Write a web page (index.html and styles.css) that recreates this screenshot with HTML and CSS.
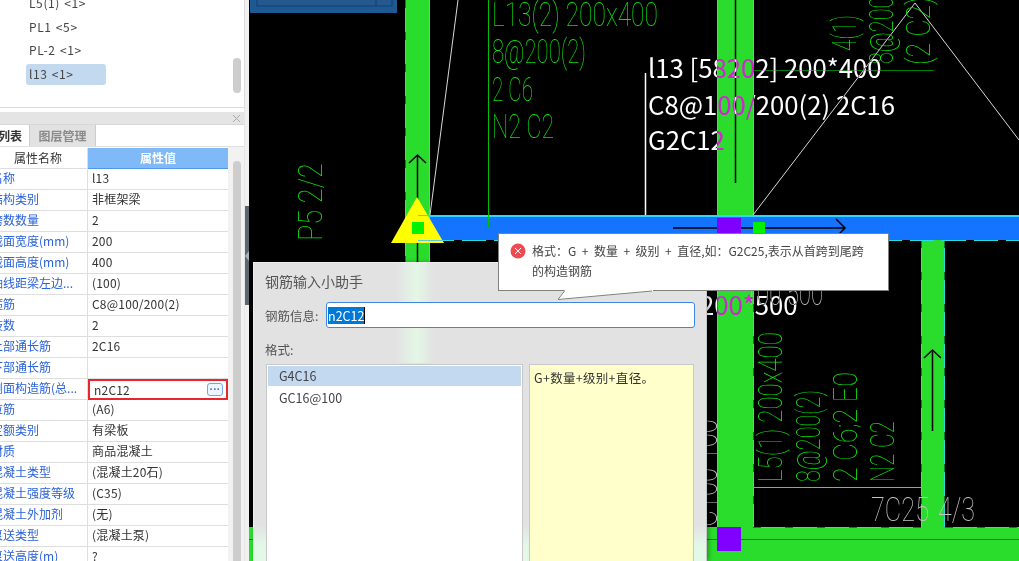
FILE: index.html
```html
<!DOCTYPE html>
<html lang="zh-CN">
<head>
<meta charset="utf-8">
<title>钢筋输入小助手</title>
<link rel="stylesheet" href="styles.css">
</head>
<body>
<div class="app">
  <aside class="side">
    <section class="tree">
      <ul class="tree-list">
        <li class="tree-item">L5(1) &lt;1&gt;</li>
        <li class="tree-item">PL1 &lt;5&gt;</li>
        <li class="tree-item">PL-2 &lt;1&gt;</li>
        <li class="tree-item selected">l13 &lt;1&gt;</li>
      </ul>
      <div class="tree-scroll"><span class="tree-thumb"></span></div>
    </section>
    <section class="props">
      <div class="props-title"><svg class="close" width="9" height="9" viewBox="0 0 9 9"><path d="M1 1l7 7M8 1l-7 7" stroke="#aaa" stroke-width="1" fill="none"/></svg></div>
      <div class="tabs">
        <span class="tab active">构件列表</span>
        <span class="tab">图层管理</span>
      </div>
      <div class="props-body">
        <div class="grid">
          <div class="hname">属性名称</div><div class="hval">属性值</div>
          <div class="n">名称</div><div class="v">l13</div>
          <div class="n">结构类别</div><div class="v">非框架梁</div>
          <div class="n">跨数数量</div><div class="v">2</div>
          <div class="n">截面宽度(mm)</div><div class="v">200</div>
          <div class="n">截面高度(mm)</div><div class="v">400</div>
          <div class="n">轴线距梁左边...</div><div class="v">(100)</div>
          <div class="n">箍筋</div><div class="v">C8@100/200(2)</div>
          <div class="n">肢数</div><div class="v">2</div>
          <div class="n">上部通长筋</div><div class="v">2C16</div>
          <div class="n">下部通长筋</div><div class="v"></div>
          <div class="n">侧面构造筋(总...</div><div class="v editing"><span>n2C12</span><button class="more" type="button">···</button></div>
          <div class="n">拉筋</div><div class="v">(A6)</div>
          <div class="n">定额类别</div><div class="v">有梁板</div>
          <div class="n">材质</div><div class="v">商品混凝土</div>
          <div class="n">混凝土类型</div><div class="v">(混凝土20石)</div>
          <div class="n">混凝土强度等级</div><div class="v">(C35)</div>
          <div class="n">混凝土外加剂</div><div class="v">(无)</div>
          <div class="n">泵送类型</div><div class="v">(混凝土泵)</div>
          <div class="n">泵送高度(m)</div><div class="v">?</div>
        </div>
        <div class="props-scroll"><span class="props-thumb"></span></div>
      </div>
    </section>
  </aside>
  <div class="gutter"><span class="gutter-top"></span><span class="gutter-arrow"></span></div>

  <main class="canvas">
    <svg class="drawing" width="770" height="561" viewBox="249 0 770 561">
      <rect x="250" y="-2" width="147" height="15" fill="#1d5a94"/>
      <rect x="257" y="-2" width="135" height="8" fill="#24588f" stroke="#153f6e"/>
      <path d="M376 0V6" stroke="#153f6e"/>

      <g fill="#2adc2c">
        <rect x="405" y="0" width="25" height="300"/>
        <rect x="717" y="0" width="37" height="561"/>
        <rect x="921" y="240" width="24" height="290"/>
        <rect x="249" y="527" width="770" height="34"/>
      </g>
      <g stroke="#29dcdc" fill="none">
        <path d="M405.500 0V270M429.500 0V270M717.500 0V215M753.500 0V215M717.500 240V527M753.500 240V527M921.500 240V527M944.500 240V527M753 527.500H921M945 527.500H1019"/>
      </g>
      <g stroke="#157a2a" stroke-dasharray="8 24" fill="none">
        <path d="M405.500 0V270M753.500 240V527M921.500 240V527M944.500 240V527M753 527.500H921M945 527.500H1019"/>
      </g>
      <path d="M249 539.500H1019" stroke="#d01818"/>

      <rect x="430" y="215" width="589" height="25" fill="#1473ff"/>
      <path d="M430 216H1019" stroke="#2fd4ff" stroke-width="2"/>
      <path d="M430 240.500H1019" stroke="#29dcdc" stroke-dasharray="24 8"/>

      <g stroke="#fff" fill="none">
        <path d="M645.500 73V215" stroke-width="1.500"/>
        <path d="M458 0L430 215M753 215L915 3L1019 140" stroke="#d8d8d8"/>
      </g>

      <g stroke="#000" stroke-width="1.500" fill="none">
        <path d="M417.500 156V262M409 163L417.500 155L426 163"/>
        <path d="M735.500 0V183"/>
        <path d="M673 228H844M836 219L845 228L836 237"/>
        <path d="M932.500 431V350M924 358L932.500 350L941 358"/>
      </g>

      <path d="M488.500 0V227" stroke="#00c000"/>
      <path d="M754 70.500H934" stroke="#008000"/>
      <path d="M753 487.500H921" stroke="#10ff10"/>

      <polygon points="417,197 391,243 444,243" fill="#ffff00"/>
      <rect x="412" y="222" width="12" height="12" fill="#00f000"/>
      <path d="M418 215.500H430M418 240.500H443" stroke="#5fc8e0"/>
      <g fill="#8000ff">
        <rect x="717" y="218" width="24" height="22"/>
        <rect x="717" y="527" width="24" height="24"/>
      </g>
      <rect x="753" y="222" width="12" height="18" fill="#00f000"/>

      <g class="cad">
        <text x="492" y="26" textLength="166" lengthAdjust="spacingAndGlyphs">L13(2) 200x400</text>
        <text x="492" y="63" textLength="94" lengthAdjust="spacingAndGlyphs">8@200(2)</text>
        <text x="492" y="101" textLength="41" lengthAdjust="spacingAndGlyphs">2 C6</text>
        <text x="492" y="138" textLength="62" lengthAdjust="spacingAndGlyphs">N2 C2</text>
        <text transform="translate(322 241) rotate(-90)" textLength="78" lengthAdjust="spacingAndGlyphs">P5 2/2</text>
        <text transform="translate(856 51) rotate(-90)" textLength="36" lengthAdjust="spacingAndGlyphs">4(1)</text>
        <text transform="translate(893 64) rotate(-90)" textLength="92" lengthAdjust="spacingAndGlyphs">8@200(2)</text>
        <text transform="translate(930 65) rotate(-90)" textLength="68" lengthAdjust="spacingAndGlyphs">(2 C2)</text>
        <text transform="translate(782 482) rotate(-90)" textLength="150" lengthAdjust="spacingAndGlyphs">L5(1) 200x400</text>
        <text transform="translate(820 482) rotate(-90)" textLength="92" lengthAdjust="spacingAndGlyphs">8@200(2)</text>
        <text transform="translate(857 482) rotate(-90)" textLength="110" lengthAdjust="spacingAndGlyphs">2 C6;2 E0</text>
        <text transform="translate(894 482) rotate(-90)" textLength="61" lengthAdjust="spacingAndGlyphs">N2 C2</text>
      </g>
      <g class="cad cad-white">
        <text x="871" y="521" textLength="58" lengthAdjust="spacingAndGlyphs">7C25</text>
        <text x="938" y="521" textLength="37" lengthAdjust="spacingAndGlyphs">4/3</text>
        <text x="745" y="305" textLength="78" lengthAdjust="spacingAndGlyphs">100 500</text>
        <text transform="translate(717 527) rotate(-90)" textLength="108" lengthAdjust="spacingAndGlyphs">C100 100</text>
      </g>

      <g class="mtext">
        <text x="648" y="78">l13 [58202] 200*400</text>
        <text x="648" y="115">C8@100/200(2) 2C16</text>
        <text x="648" y="150">G2C12</text>
        <text x="700" y="315">200*500</text>
      </g>
    </svg>

    <section class="dialog">
      <i class="glow-v"></i>
      <i class="glow-h"></i>
      <h2 class="dialog-title">钢筋输入小助手</h2>
      <div class="field">
        <label class="field-label" for="rebar">钢筋信息:</label>
        <div class="field-input" id="rebar"><span class="sel">n2C12</span></div>
      </div>
      <div class="format-label">格式:</div>
      <div class="format-panes">
        <ul class="format-list">
          <li class="format-item selected">G4C16</li>
          <li class="format-item">GC16@100</li>
        </ul>
        <div class="format-desc">G+数量+级别+直径。</div>
      </div>
    </section>

    <div class="tip">
      <svg class="tip-tail" width="100" height="12" viewBox="0 0 100 12"><polygon points="8,0 0,10 96,1 96,0" fill="#fff"/><path d="M7.500 1L1 9.500L95 1" fill="none" stroke="#808080"/></svg>
      <svg class="tip-icon" width="16" height="16" viewBox="0 0 16 16"><circle cx="8" cy="8" r="7.500" fill="#ee4a52"/><path d="M5 5l6 6M11 5l-6 6" stroke="#fff" stroke-width="1" fill="none"/></svg>
      <p class="tip-text">格式：G + 数量 + 级别 + 直径,如：G2C25,表示从首跨到尾跨<br>的构造钢筋</p>
    </div>
  </main>
</div>
</body>
</html>
```
FILE: styles.css
```css
* { box-sizing: border-box; }
html, body { margin: 0; height: 100%; overflow: hidden; }
body { font-family: "Noto Sans CJK SC", "Noto Sans", sans-serif; font-size: 12px; color: #333; background: #000; }
ul { list-style: none; margin: 0; padding: 0; }

.app { display: flex; width: 1019px; height: 561px; overflow: hidden; }

.side { width: 245px; flex: none; background: #fff; display: flex; flex-direction: column; }
.tree { height: 108px; flex: none; border-bottom: 1px solid #dcdcdc; border-right: 1px solid #dcdcdc; position: relative; overflow: hidden; }
.tree-list { margin-top: -7px; padding-left: 26px; display: flex; flex-direction: column; gap: 2px; }
.tree-item { width: 80px; height: 21.500px; line-height: 20px; padding-left: 3px; border-radius: 3px; color: #444; letter-spacing: .6px; word-spacing: 1px; }
.tree-item.selected { background: #c3d9f0; }
.tree-scroll { position: absolute; top: 0; right: 3px; width: 8px; height: 100%; }
.tree-thumb { position: absolute; top: 58px; left: 0; width: 8px; height: 35px; border-radius: 4px; background: #cdcdcd; }

.props { flex: 1; min-height: 0; padding-top: 4px; display: flex; flex-direction: column; border-right: 1px solid #e6e6e6; }
.props-title { height: 12px; flex: none; background: #e4e4e4; display: flex; align-items: center; justify-content: flex-end; padding-right: 3px; }
.tabs { height: 23px; flex: none; display: flex; margin-left: -40px; border-bottom: 1px solid #e0e0e0; border-top: 1px solid #d8d8d8; }
.tab { width: 66px; font-weight: 700; font-size: 12px; line-height: 21px; text-align: center; color: #333; white-space: nowrap; }
.tab.active { width: 70px; background: #fff; text-align: right; padding-right: 7px; border-right: 1px solid #ccc; }
.tab:not(.active) { background: #e2e2e2; color: #8a8a8a; border-right: 1px solid #ccc; }

.props-body { flex: 1; min-height: 0; display: flex; position: relative; }
.grid { width: 228px; flex: none; margin-top: 1px; display: grid; grid-template-columns: 88px 140px; grid-auto-rows: 21px; }
.hname, .n, .hval, .v { border-bottom: 1px solid #dedede; white-space: nowrap; line-height: 18px; height: 21px; }
.hname, .n { border-right: 1px solid #dedede; }
.hname { padding: 0 25px 0 0; text-align: right; color: #333; line-height: 20px; }
.n { color: #2a62d8; overflow: hidden; text-indent: -9px; }
.hval { background: #7fb9f7; color: #fff; font-weight: 700; text-align: center; border-bottom-color: #4f97e8; line-height: 20px; }
.v { padding-left: 4px; color: #333; letter-spacing: .2px; }
.v.editing { border: 2px solid #e8262c; display: flex; align-items: center; justify-content: space-between; padding: 0 3px 0 4px; line-height: 16px; }
.more { width: 16px; height: 13px; padding: 0; margin: 0; border: 1px solid #6ea7ea; border-radius: 3px; background: #eef5ff; color: #3a78cc; font: 700 11px/9px "Liberation Sans", sans-serif; }
.props-scroll { flex: 1; background: #f2f2f2; position: relative; }
.props-thumb { position: absolute; top: 14px; left: 5px; width: 8px; bottom: 0; border-radius: 4px 4px 0 0; background: #cdcdcd; }

.gutter { width: 4px; flex: none; background: #f0f0f0; position: relative; }
.gutter-top { position: absolute; left: 0; right: 0; top: 206px; height: 99px; background: #5a6672; }
.gutter-arrow { position: absolute; left: 0; top: 251px; width: 0; height: 0; border: 5px solid transparent; border-left: 0; border-right: 4px solid #aab2b8; }

.canvas { position: relative; flex: 1; background: #000; overflow: hidden; }
.drawing { position: absolute; left: 0; top: 0; display: block; }
.cad text { font-family: Roboto, "Liberation Mono", monospace; font-weight: 100; font-size: 34px; fill: #0ee00e; }
.cad-white text { fill: #c4c4c4; }
.mtext text { font-family: "Noto Sans CJK SC", "Noto Sans", sans-serif; font-size: 25.700px; fill: #fff; mix-blend-mode: difference; }

.dialog { position: absolute; left: 4px; top: 262px; width: 454px; height: 299px; background: #e2e2e2; border-left: 1px solid #eee; border-top: 1px solid #eee; border-right: 1px solid #c8c8c8; padding: 9px 11px 0 11px; overflow: hidden; box-shadow: 2px 0 4px rgba(0,0,0,.3); }
.glow-v { position: absolute; left: 142px; top: 0; width: 38px; height: 100px; background: linear-gradient(90deg, rgba(228,250,232,0), #e4f7e6 55%, rgba(228,250,232,0)); }
.glow-h { position: absolute; left: 0; right: 0; bottom: 0; height: 36px; background: linear-gradient(180deg, rgba(226,250,232,0), #e2f9e8 60%); }
.dialog-title { position: relative; margin: 0; font-size: 14px; font-weight: 400; line-height: 18px; color: #555; }
.field { position: relative; display: flex; align-items: center; margin-top: 12px; }
.field-label { width: 61px; flex: none; font-size: 12.500px; color: #555; }
.field-input { flex: 1; height: 26px; background: #fff; border: 1px solid #3e86e6; border-radius: 3px; padding: 4px 1px; }
.sel { display: inline-block; height: 17px; line-height: 17px; font-size: 12.500px; background: #0078d7; color: #fff; border-right: 1px solid #000; }
.format-label { position: relative; margin-top: 14px; height: 16px; line-height: 16px; color: #555; font-size: 12.500px; }
.format-panes { position: relative; display: flex; gap: 6px; margin-top: 6px; height: 220px; padding-left: 1px; }
.format-list { width: 257px; flex: none; background: #fff; border: 1px solid #c8c8c8; padding: 1px; }
.format-item { height: 20px; line-height: 19px; padding-left: 11px; margin-bottom: 2px; color: #444; font-size: 12.500px; }
.format-item.selected { background: #c3d9f0; }
.format-desc { width: 165px; flex: none; background: #ffffcc; border: 1px solid #c8c8c8; padding: 3px 4px; color: #333; font-size: 12.500px; line-height: 20px; letter-spacing: .3px; }

.tip { position: absolute; left: 249px; top: 233px; width: 391px; height: 58px; background: #fff; border: 1px solid #808080; display: flex; align-items: flex-start; padding: 10px 11px; gap: 6px; }
.tip-icon { flex: none; margin-top: -1px; }
.tip-text { margin: -3px 0 0; color: #444; font-size: 12px; line-height: 20px; white-space: nowrap; word-spacing: 2.800px; }
.tip-tail { position: absolute; left: 58px; top: 56px; }
```
